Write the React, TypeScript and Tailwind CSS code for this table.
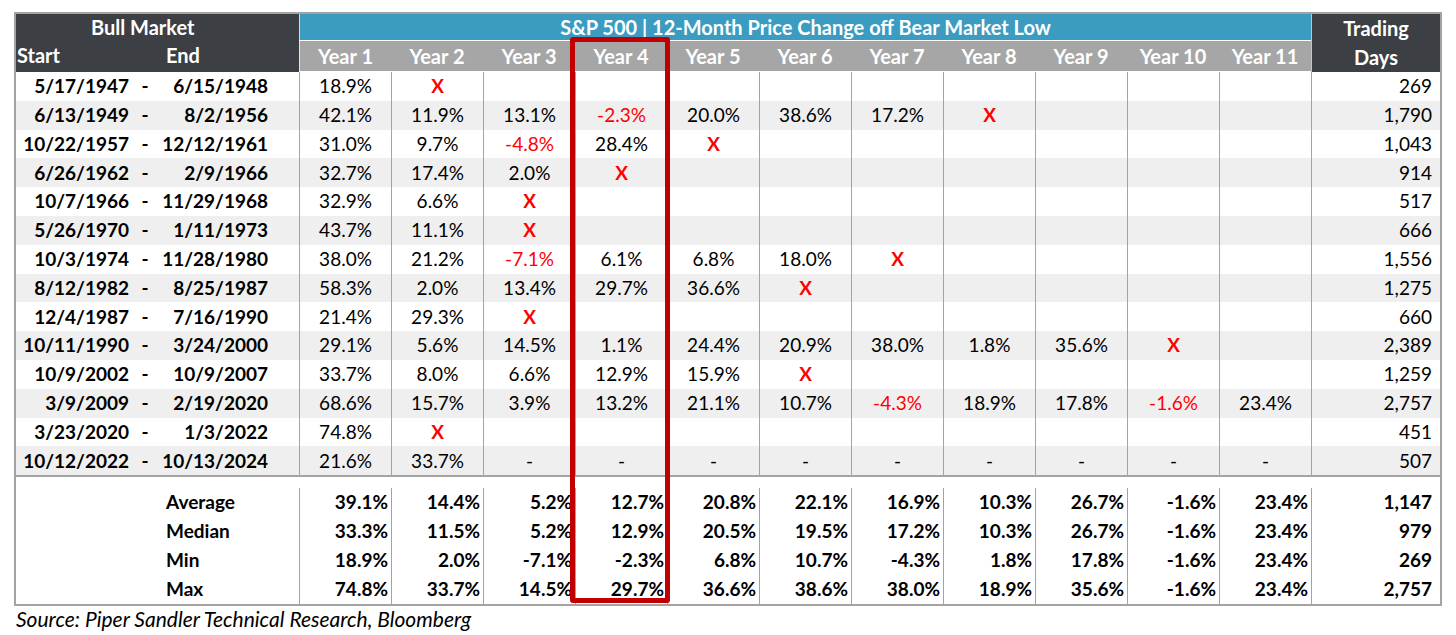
import React from "react";

type Cell = string | null;

const rows: { start: string; end: string; years: Cell[]; days: string }[] = [
  { start: "5/17/1947", end: "6/15/1948", years: ["18.9%", "X"], days: "269" },
  {
    start: "6/13/1949",
    end: "8/2/1956",
    years: ["42.1%", "11.9%", "13.1%", "-2.3%", "20.0%", "38.6%", "17.2%", "X"],
    days: "1,790",
  },
  { start: "10/22/1957", end: "12/12/1961", years: ["31.0%", "9.7%", "-4.8%", "28.4%", "X"], days: "1,043" },
  { start: "6/26/1962", end: "2/9/1966", years: ["32.7%", "17.4%", "2.0%", "X"], days: "914" },
  { start: "10/7/1966", end: "11/29/1968", years: ["32.9%", "6.6%", "X"], days: "517" },
  { start: "5/26/1970", end: "1/11/1973", years: ["43.7%", "11.1%", "X"], days: "666" },
  {
    start: "10/3/1974",
    end: "11/28/1980",
    years: ["38.0%", "21.2%", "-7.1%", "6.1%", "6.8%", "18.0%", "X"],
    days: "1,556",
  },
  { start: "8/12/1982", end: "8/25/1987", years: ["58.3%", "2.0%", "13.4%", "29.7%", "36.6%", "X"], days: "1,275" },
  { start: "12/4/1987", end: "7/16/1990", years: ["21.4%", "29.3%", "X"], days: "660" },
  {
    start: "10/11/1990",
    end: "3/24/2000",
    years: ["29.1%", "5.6%", "14.5%", "1.1%", "24.4%", "20.9%", "38.0%", "1.8%", "35.6%", "X"],
    days: "2,389",
  },
  { start: "10/9/2002", end: "10/9/2007", years: ["33.7%", "8.0%", "6.6%", "12.9%", "15.9%", "X"], days: "1,259" },
  {
    start: "3/9/2009",
    end: "2/19/2020",
    years: ["68.6%", "15.7%", "3.9%", "13.2%", "21.1%", "10.7%", "-4.3%", "18.9%", "17.8%", "-1.6%", "23.4%"],
    days: "2,757",
  },
  { start: "3/23/2020", end: "1/3/2022", years: ["74.8%", "X"], days: "451" },
  {
    start: "10/12/2022",
    end: "10/13/2024",
    years: ["21.6%", "33.7%", "-", "-", "-", "-", "-", "-", "-", "-", "-"],
    days: "507",
  },
];

const summary = [
  {
    label: "Average",
    values: ["39.1%", "14.4%", "5.2%", "12.7%", "20.8%", "22.1%", "16.9%", "10.3%", "26.7%", "-1.6%", "23.4%"],
    days: "1,147",
  },
  {
    label: "Median",
    values: ["33.3%", "11.5%", "5.2%", "12.9%", "20.5%", "19.5%", "17.2%", "10.3%", "26.7%", "-1.6%", "23.4%"],
    days: "979",
  },
  {
    label: "Min",
    values: ["18.9%", "2.0%", "-7.1%", "-2.3%", "6.8%", "10.7%", "-4.3%", "1.8%", "17.8%", "-1.6%", "23.4%"],
    days: "269",
  },
  {
    label: "Max",
    values: ["74.8%", "33.7%", "14.5%", "29.7%", "36.6%", "38.6%", "38.0%", "18.9%", "35.6%", "-1.6%", "23.4%"],
    days: "2,757",
  },
];

const yearLabels = Array.from({ length: 11 }, (_, i) => `Year ${i + 1}`);

const grid = "grid grid-cols-[283px_repeat(11,minmax(0,1fr))_129px]";

function YearCell({ value }: { value: Cell }) {
  const red = value === "X" || (value !== null && value.startsWith("-") && value !== "-");
  return (
    <div
      className={`flex items-center justify-center border-l border-[#a3a3a3] ${
        red ? "text-[#ff0000]" : "text-black"
      } ${value === "X" ? "font-bold" : ""}`}
    >
      {value ?? ""}
    </div>
  );
}

export default function App() {
  return (
    <div className="h-[635px] w-[1456px] bg-white font-['Lato',sans-serif] text-black">
      <div className="relative ml-[14px] w-[1428px] pt-[12px]">
        <div className="border-x-2 border-t-2 border-[#a3a3a3]">
          {/* header */}
          <div className={`${grid} text-[20px] font-bold text-white`}>
            <div className="row-span-2 flex flex-col bg-[#3c3f44]">
              <div className="flex h-[26px] items-center pl-[75px]">Bull Market</div>
              <div className="flex h-[30px] items-center">
                <span className="w-[150px] pl-[1px]">Start</span>
                <span>End</span>
              </div>
            </div>
            <div className="col-span-11 flex h-[26px] items-center justify-center border-l border-white/70 bg-[#3c9bc0]">
              S&amp;P 500 | 12-Month Price Change off Bear Market Low
            </div>
            <div className="row-span-2 flex flex-col items-center justify-center border-l border-white/70 bg-[#3c3f44] leading-[29px]">
              <span>Trading</span>
              <span>Days</span>
            </div>
            {yearLabels.map((y, i) => (
              <div
                key={y}
                className={`flex h-[30px] items-center justify-center bg-[#a6a6a6] ${i === 0 ? "border-l border-white/70" : ""}`}
              >
                {y}
              </div>
            ))}
          </div>

          {/* data rows */}
          <div className="border-b-2 border-[#a3a3a3] text-[19px]">
            {rows.map((r, idx) => (
              <div
                key={r.start}
                className={`${grid} h-[28.8px] ${idx % 2 === 1 ? "bg-[#efefef]" : "bg-white"}`}
              >
                <div className="flex items-center font-bold">
                  <span className="w-[113px] text-right">{r.start}</span>
                  <span className="w-[32px] text-center">-</span>
                  <span className="flex-1 pr-[31px] text-right">{r.end}</span>
                </div>
                {Array.from({ length: 11 }, (_, i) => (
                  <YearCell key={i} value={r.years[i] ?? null} />
                ))}
                <div className="flex items-center justify-end border-l border-[#a3a3a3] pr-[8px]">{r.days}</div>
              </div>
            ))}
          </div>

          {/* summary */}
          <div className="border-b-2 border-[#a3a3a3] text-[19px] font-bold">
            {summary.map((s, idx) => (
              <div key={s.label} className={`${grid} ${idx === 0 ? "h-[40px] pt-[11px]" : "h-[29px]"}`}>
                <div className="flex items-center pl-[150px]">{s.label}</div>
                {s.values.map((v, i) => (
                  <div key={i} className="flex items-center justify-end border-l border-[#a3a3a3] pr-[3px]">
                    {v}
                  </div>
                ))}
                <div className="flex items-center justify-end border-l border-[#a3a3a3] pr-[8px]">{s.days}</div>
              </div>
            ))}
          </div>
        </div>

        {/* Year 4 highlight */}
        <div className="pointer-events-none absolute top-[37px] left-[556px] h-[566px] w-[100px] rounded-[3px] border-[5px] border-[#c00000]" />

        <p className="pl-[2px] text-[21px] italic leading-[26px]">
          Source: Piper Sandler Technical Research, Bloomberg
        </p>
      </div>
    </div>
  );
}
